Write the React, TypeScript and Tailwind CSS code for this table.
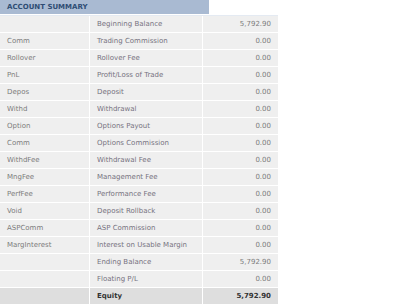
const rows: [string, string, string][] = [
  ["", "Beginning Balance", "5,792.90"],
  ["Comm", "Trading Commission", "0.00"],
  ["Rollover", "Rollover Fee", "0.00"],
  ["PnL", "Profit/Loss of Trade", "0.00"],
  ["Depos", "Deposit", "0.00"],
  ["Withd", "Withdrawal", "0.00"],
  ["Option", "Options Payout", "0.00"],
  ["Comm", "Options Commission", "0.00"],
  ["WithdFee", "Withdrawal Fee", "0.00"],
  ["MngFee", "Management Fee", "0.00"],
  ["PerfFee", "Performance Fee", "0.00"],
  ["Void", "Deposit Rollback", "0.00"],
  ["ASPComm", "ASP Commission", "0.00"],
  ["MargInterest", "Interest on Usable Margin", "0.00"],
  ["", "Ending Balance", "5,792.90"],
  ["", "Floating P/L", "0.00"],
];

export default function App() {
  return (
    <div className="w-[400px] h-[304px] bg-white overflow-hidden font-['DejaVu_Sans',Verdana,sans-serif] text-[7px]">
      <div className="w-[209px] h-[14px] bg-[#a9bad2] flex items-center pl-[7px]">
        <span className="font-bold text-[#2f4d74]">ACCOUNT SUMMARY</span>
      </div>
      <div className="w-[278px] mt-px border-t border-[#e4eaf2]">
        {rows.map(([code, label, value], i) => (
          <div key={i} className="flex h-[17px] bg-[#efefef] border-b border-white text-[#7c7c7c]">
            <div className="w-[90px] flex items-center pl-[7px] border-r border-white">{code}</div>
            <div className="w-[113px] flex items-center pl-[7px] border-r border-white text-[#767280]">{label}</div>
            <div className="flex-1 flex items-center justify-end pr-[7px]">{value}</div>
          </div>
        ))}
        <div className="flex h-[17px] bg-[#dedede] font-bold text-[#333]">
          <div className="w-[90px] border-r border-white"></div>
          <div className="w-[113px] flex items-center pl-[7px] border-r border-white">Equity</div>
          <div className="flex-1 flex items-center justify-end pr-[7px]">5,792.90</div>
        </div>
      </div>
    </div>
  );
}
